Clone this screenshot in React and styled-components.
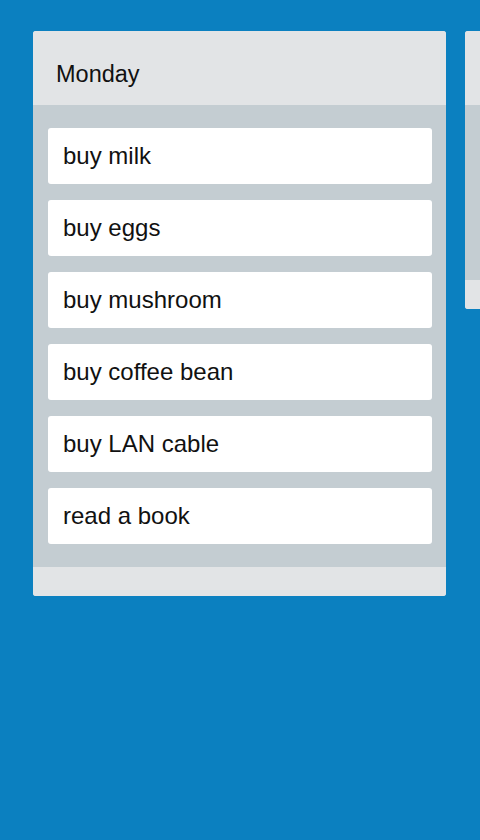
import React from "react";
import styled, { createGlobalStyle } from "styled-components";

const Global = createGlobalStyle`
  html, body { margin: 0; padding: 0; background: #0b80c0; }
  body { font-family: "Liberation Sans", Arial, sans-serif; }
  * { box-sizing: border-box; }
`;

const Board = styled.div`
  display: flex;
  align-items: flex-start;
  gap: 19px;
  padding: 31px 0 0 33px;
  width: 480px;
  height: 840px;
  overflow: hidden;
  background: #0b80c0;
`;

const Column = styled.div`
  flex: 0 0 413px;
  display: flex;
  flex-direction: column;
  border-radius: 3px;
  overflow: hidden;
  background: #e2e4e6;
`;

const Header = styled.div`
  height: 74px;
  display: flex;
  align-items: center;
  padding: 12px 0 0 23px;
  font-size: 23.5px;
  color: #111;
  background: #e2e4e6;
`;

const Body = styled.div`
  display: flex;
  flex-direction: column;
  gap: 16px;
  padding: 23px 14px 23px 15px;
  background: #c4cdd2;
  min-height: ${(p) => p.$minH || 0}px;
`;

const Card = styled.div`
  height: 56px;
  display: flex;
  align-items: center;
  padding: 0 15px;
  background: #fff;
  border-radius: 3px;
  font-size: 24px;
  color: #111;
`;

const Footer = styled.div`
  height: 29px;
  background: #e2e4e6;
`;

const items = [
  "buy milk",
  "buy eggs",
  "buy mushroom",
  "buy coffee bean",
  "buy LAN cable",
  "read a book",
];

export default function App() {
  return (
    <>
      <Global />
      <Board>
        <Column>
          <Header>Monday</Header>
          <Body>
            {items.map((t) => (
              <Card key={t}>{t}</Card>
            ))}
          </Body>
          <Footer />
        </Column>
        <Column>
          <Header />
          <Body $minH={175} />
          <Footer />
        </Column>
      </Board>
    </>
  );
}
